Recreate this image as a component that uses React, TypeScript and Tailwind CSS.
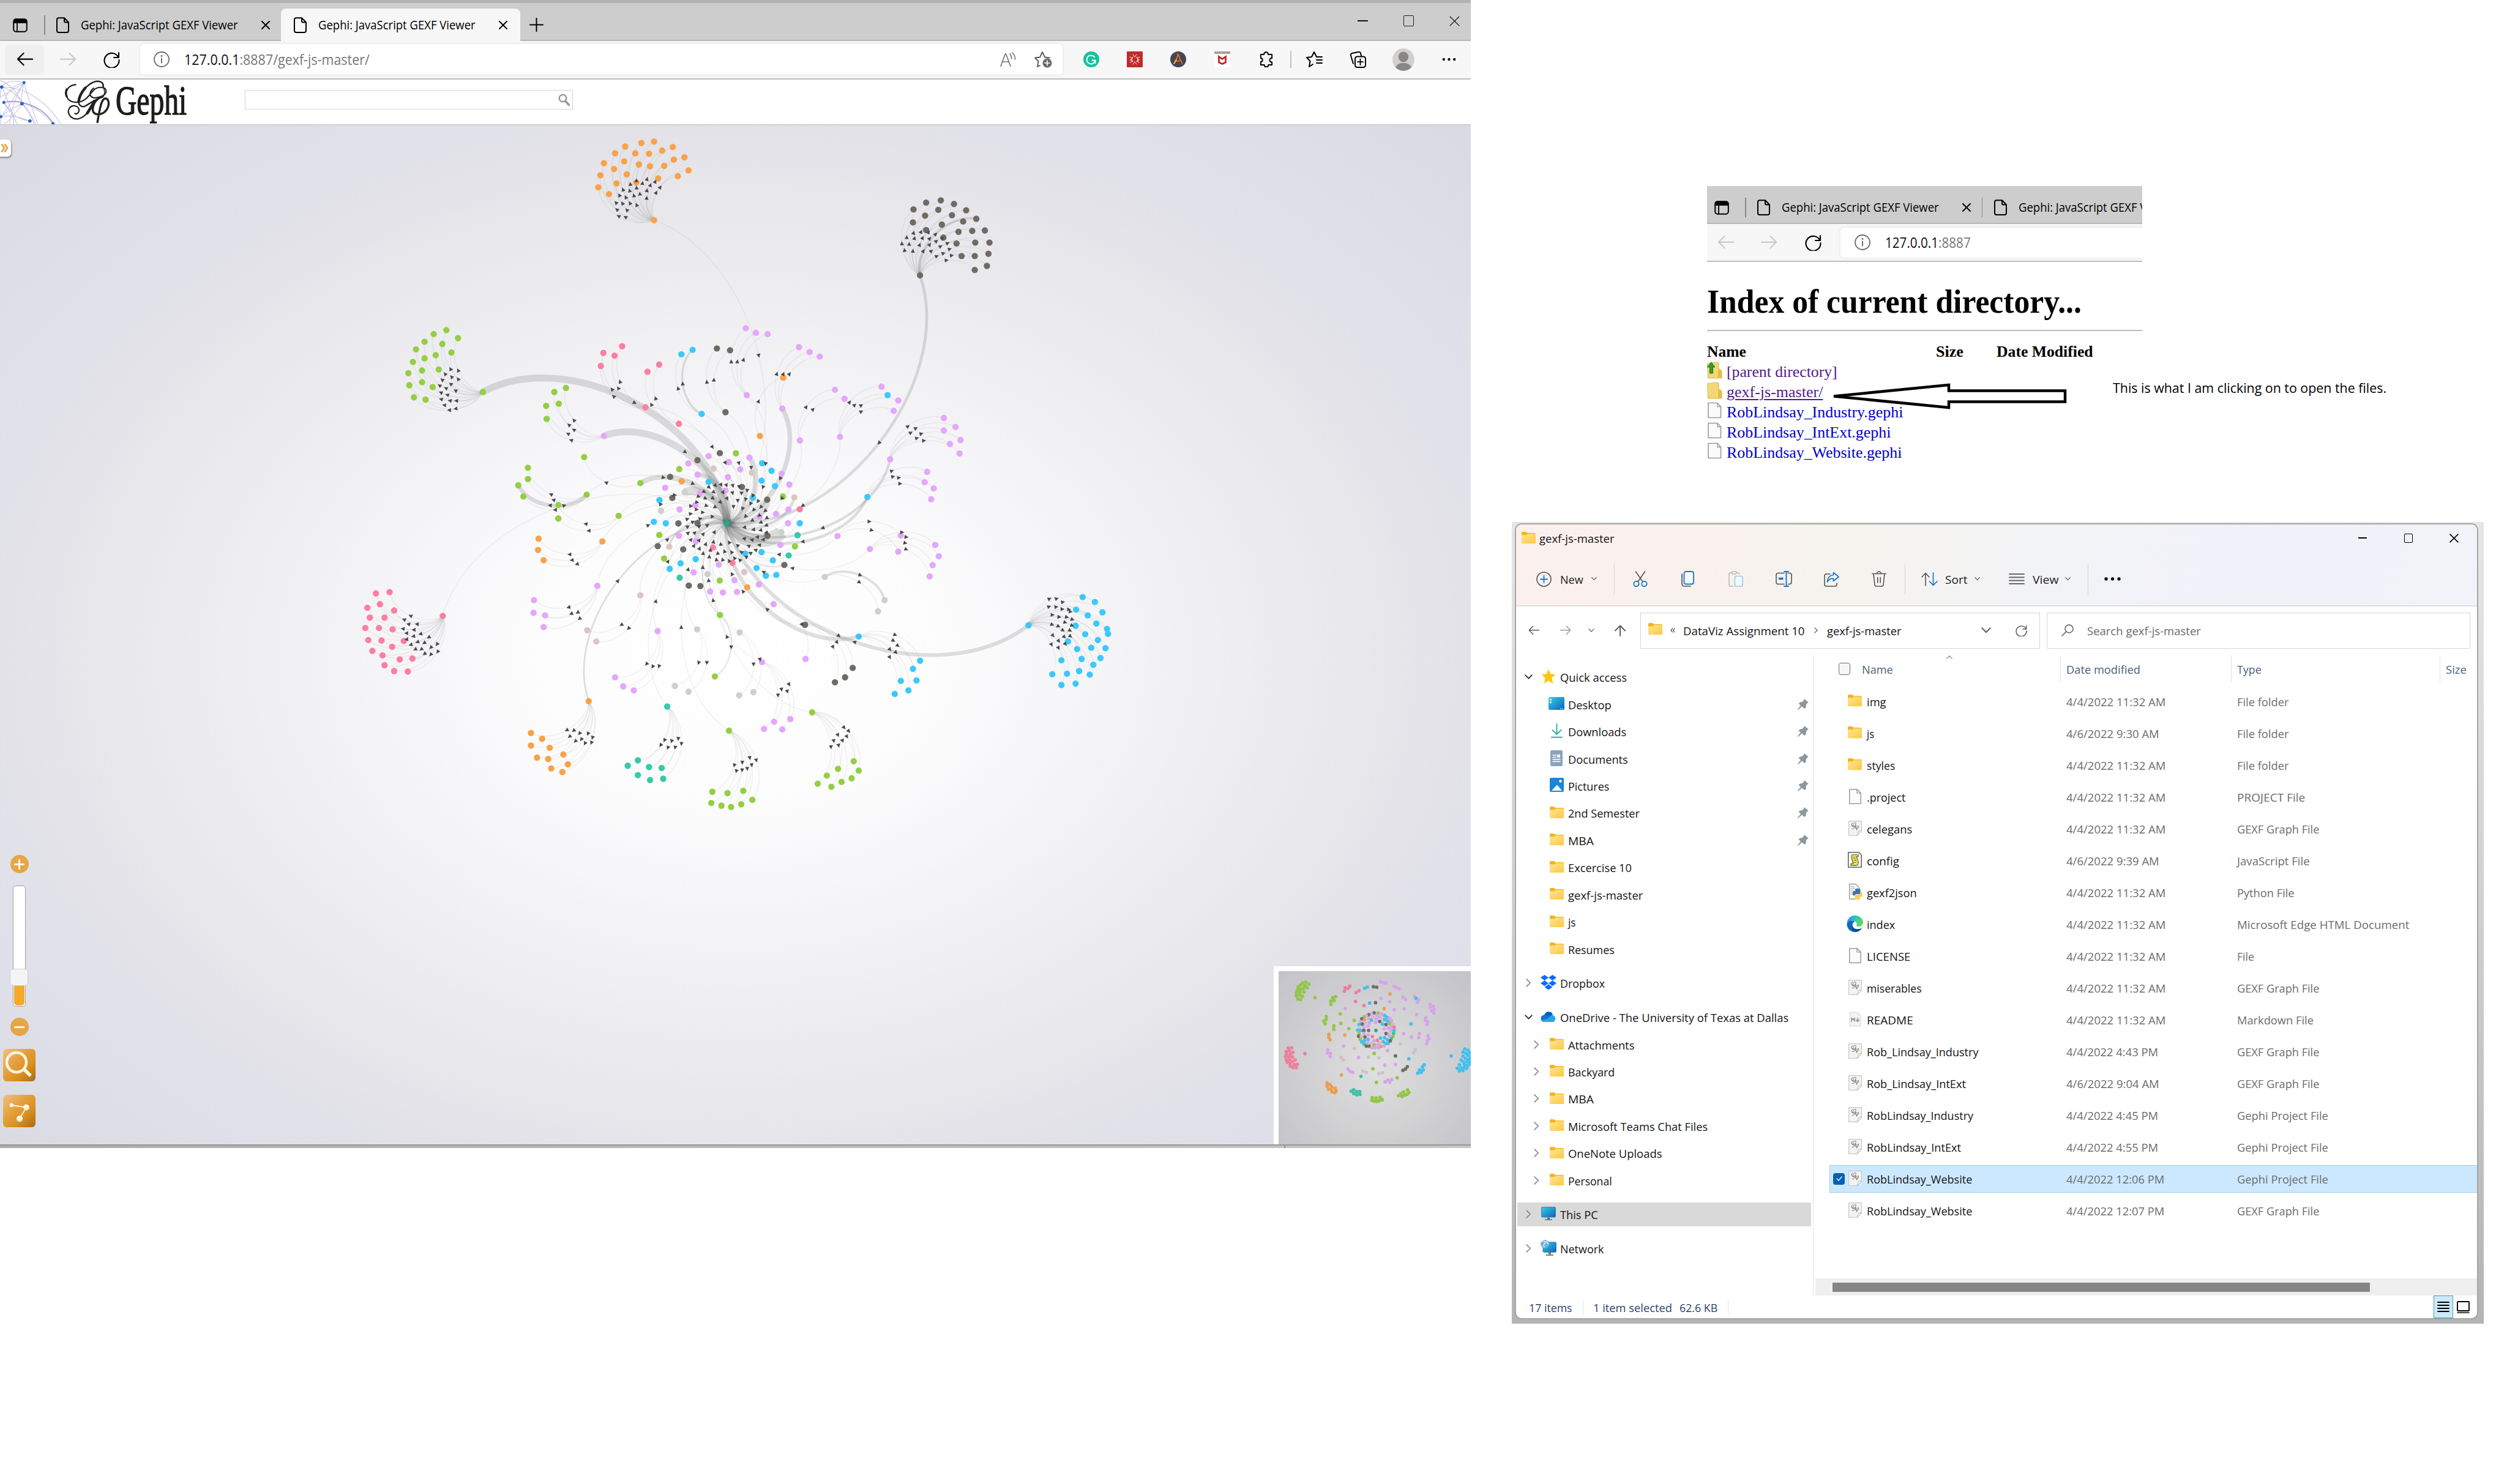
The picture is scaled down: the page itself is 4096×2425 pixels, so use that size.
import React, { useLayoutEffect, useRef, useState } from "react";

/* ---------- text that is squeezed or stretched to a given width ---------- */
function Fit({ w, children, className = "" }: { w: number; children: React.ReactNode; className?: string }) {
  const ref = useRef<HTMLSpanElement>(null);
  const [k, setK] = useState(1);
  useLayoutEffect(() => {
    const el = ref.current;
    if (el && el.offsetWidth) setK(w / el.offsetWidth);
  }, [w]);
  return (
    <span className={"block shrink-0 whitespace-nowrap " + className} style={{ width: w }}>
      <span ref={ref} className="inline-block origin-left" style={{ transform: `scaleX(${k})` }}>
        {children}
      </span>
    </span>
  );
}

type SvgP = { w: number; h: number; vb: string; className?: string; children: React.ReactNode };
function Svg({ w, h, vb, className = "", children }: SvgP) {
  return (
    <svg
      width={w}
      height={h}
      viewBox={vb}
      preserveAspectRatio="none"
      fill="none"
      stroke="currentColor"
      strokeLinecap="round"
      strokeLinejoin="round"
      className={"block shrink-0 " + className}
    >
      {children}
    </svg>
  );
}

/* ---------- graph data ---------- */
const COLORS: Record<string, string> = {
  o: "#f9a247",
  k: "#6f6b64",
  g: "#94cf43",
  r: "#fb7fa1",
  c: "#3cc8fb",
  p: "#e4a7fb",
  s: "#cfcfcf",
  t: "#38caa8",
  b: "#dcc6c3",
};
type Pt = { x: number; y: number; c: string; w: number };
const CENTER = { x: 1281, y: 921 };

function parse(src: string, color: string, sx: number, sy: number, ox: number, oy: number): Pt[] {
  return src
    .split(";")
    .filter(Boolean)
    .map((item) => {
      const f = item.split(",");
      return {
        x: Number(f[0]) / sx + ox,
        y: Number(f[1]) / sy + oy,
        c: f[2] || color,
        w: f[3] ? Number(f[3]) : 0,
      };
    });
}
const outer = (src: string, color: string) => parse(src, color, 1.12, 1.2645, 600, 220);
const inner = (src: string, color: string) => parse(src, color, 2.6133, 2.8, 1000, 650);

/* default colour, hub, leaves */
const GROUPS: [string, string, string][] = [
  ["o", "619,211", "619,36;594,39;562,47;656,48;635,56;542,62;582,62;609,63;679,71;658,76;560,80;520,84;589,87;639,90;611,91;540,97;687,100;565,109;513,111;666,113;627,118;584,127;545,129;509,138;530,153"],
  ["k", "1144,334,k,5", "1185,167;1156,172;1211,175;1131,187;1180,188;1235,189;1154,201;1207,200;1255,208,k,4;1130,216;1229,214;1187,221;1156,233;1220,237;1247,235;1272,234;1190,250;1216,263;1253,261;1281,261;1226,291;1252,291;1279,286;1276,313;1252,322"],
  ["g", "281,594,g,12", "209,456;184,465;232,474;166,482;201,487;149,499;219,506;188,512;166,519;143,527;194,544;161,546;134,552;161,572;136,579;182,583;145,606;168,611"],
  ["r", "202,1093", "70,1043;97,1040;78,1067;53,1075;106,1081;58,1097;87,1097;49,1120;76,1120;103,1123;55,1147;81,1148;125,1149;102,1162;63,1171;83,1181;117,1190;142,1188;87,1203;106,1216;133,1217"],
  ["c", "1358,1114,c,6.5", "1465,1051;1489,1062;1452,1079;1504,1085;1475,1092;1492,1110;1451,1115;1513,1122;1515,1133;1470,1134;1495,1147;1436,1150;1454,1167;1482,1164;1510,1165;1423,1192;1463,1189;1500,1187;1486,1202;1458,1216;1405,1223;1434,1222;1479,1224;1423,1247;1451,1244"],
  ["o", "490,1283,o,3", "376,1354;398,1367;376,1382;413,1387;388,1409;410,1412;440,1402;449,1424;416,1433;438,1441"],
  ["t", "645,1295", "587,1415;567,1427;609,1430;634,1432;587,1448;611,1459;637,1456"],
  ["g", "767,1349", "734,1485;764,1488;795,1483;813,1503;732,1510;752,1516;771,1519;791,1513"],
  ["g", "931,1308", "1013,1417;1023,1438;1009,1455;982,1434;960,1449;989,1463;942,1467;969,1474"],
  ["c", "1023,1139,c,7", "1144,1193;1130,1211;1106,1238;1137,1237;1121,1259;1094,1267"],
  ["k", "917,1113", "1011,1209;996,1230;976,1241"],
  ["p", "832,1196", "888,1323;856,1329;836,1345;872,1346"],
  ["p", "626,1127", "542,1230;558,1250;579,1259"],
  ["s", "704,1123", "660,1249;687,1262"],
  ["s", "788,1130", "787,1270;815,1263"],
  ["g", "749,1091,g,2", "739,1228,g,2"],
  ["p", "507,1026", "382,1058;381,1086;404,1092;401,1118"],
  ["b", "592,1047", "487,1125;505,1150"],
  ["o", "517,927", "391,921;390,946;401,969"],
  ["g", "549,870", "430,876;430,846"],
  ["g", "486,823", "370,763;370,788;351,802,g,7;361,827"],
  ["g", "592,797,g,9", "481,739"],
  ["g", "520,692,p,12", "422,594;445,585;406,625;431,620;407,654"],
  ["r", "602,628", "519,507;556,492;541,513;514,536"],
  ["r", "668,665", "629,533;606,549"],
  ["c", "713,643", "695,500,c,3.5;673,510"],
  ["k", "760,639", "743,497;769,501"],
  ["p", "802,601", "800,452;820,462;843,465"],
  ["p", "872,631,p,8", "905,494;926,505;946,515"],
  ["o", "828,692", "874,562"],
  ["p", "907,702", "976,589;995,609"],
  ["p", "986,694", "1068,582;1080,601,c;1101,613;1092,636"],
  ["p", "1085,744,p,4.5", "1191,652;1191,680;1214,672;1224,701;1203,710;1222,731"],
  ["p", "1040,828,c,5", "1158,772;1153,795;1171,809;1166,833"],
  ["p", "981,915", "1106,914;1101,950"],
  ["p", "1045,944", "1174,935;1181,960;1169,980;1163,1005"],
  ["s", "956,1006", "1074,1058,s,4;1061,1083"],
  ["p", "855,1067", "918,1189"],
];

const RING = inner(
  "702,413,k;776,414,g;650,428,p;838,435,p,9;599,448,k;557,464,p;743,458,p;897,463,c;796,493,p;673,489,b;849,510,b;515,492,g;940,500,c;599,519,p,8;986,515,p;739,532,p;473,530,k;526,552,o;650,555,c;894,549,c;956,576,c;1022,568,p;450,584,p;804,580,k,6;728,598,p;611,610,p;540,606,s,15;483,634,k;992,627,g;1045,631,b,5;424,645,c;854,633,c;920,643,k,10;589,670,p;431,698,s;516,691,p;1018,692,p;1070,690,r;961,713,p;885,728,p;398,752,c;453,759,c;511,760,k;599,759,k,6;1016,759,p;1070,759,c;985,803,s,24;423,817,g;514,821,p;921,821,k,12;1060,818,t;591,849,p,8;416,872,k;469,875,b,3;670,879,r;533,888,k;981,866,p;1048,873,g;819,909,c;894,902,c;1019,918,t;445,933,g;591,936,c;521,957,c;760,955,r;697,963,p;946,942,c;999,965,k,2;471,984,c;581,1002,p;871,980,c;645,1010,s;814,1000,b;517,1028,t;914,1018,c;962,1014,c;769,1040,p;701,1042,g;559,1067,k;612,1069,k;828,1075,o;882,1061,p;657,1096,p;716,1101,p;781,1098,p",
  "p",
);

type Edge = { d: string; w: number; ax: number; ay: number; a: number };
/* every edge is a cubic arc that bulges to one side of its chord */
function edge(s: { x: number; y: number }, t: { x: number; y: number }, w: number): Edge {
  const dx = t.x - s.x;
  const dy = t.y - s.y;
  const c1 = [s.x + 0.2 * dx + 0.3 * dy, s.y + 0.2 * dy - 0.3 * dx];
  const c2 = [s.x + 0.8 * dx + 0.3 * dy, s.y + 0.8 * dy - 0.3 * dx];
  return {
    d: `M${s.x} ${s.y}C${c1[0]} ${c1[1]} ${c2[0]} ${c2[1]} ${t.x} ${t.y}`,
    w,
    ax: (s.x + t.x) / 2 + 0.225 * dy,
    ay: (s.y + t.y) / 2 - 0.225 * dx,
    a: (Math.atan2(dy, dx) * 180) / Math.PI,
  };
}

const NODES: Pt[] = [...RING];
const EDGES: Edge[] = RING.map((n) => edge(n, CENTER, n.w));
for (const [color, hubSrc, leafSrc] of GROUPS) {
  const hub = outer(hubSrc, color)[0];
  const leaves = outer(leafSrc, color);
  NODES.push(hub, ...leaves);
  EDGES.push(edge(hub, CENTER, hub.w), ...leaves.map((l) => edge(hub, l, l.w)));
}

function NodeDots({ r }: { r: number }) {
  return (
    <g stroke="none">
      {NODES.map((n, i) => (
        <circle key={i} cx={n.x} cy={n.y} r={r} fill={COLORS[n.c]} />
      ))}
      <circle cx={CENTER.x} cy={CENTER.y} r={r} fill="#20ab88" />
    </g>
  );
}

function Graph() {
  return (
    <Svg w={2403} h={1666} vb="0 220 2592 1797">
      {EDGES.map((e, i) => (
        <path
          key={i}
          d={e.d}
          strokeLinecap="butt"
          stroke={e.w ? "rgba(70,70,70,0.17)" : "rgba(60,60,60,0.06)"}
          strokeWidth={e.w || 1.9}
        />
      ))}
      <NodeDots r={5.6} />
      <g fill="#4a4a4a" stroke="none">
        {EDGES.map((e, i) => (
          <path key={i} d="M4.400 0L-2.500 3.600V-3.600Z" transform={`translate(${e.ax} ${e.ay}) rotate(${e.a})`} />
        ))}
      </g>
    </Svg>
  );
}

/* ---------- browser icons ---------- */
const TabActions = () => (
  <Svg w={24} h={23} vb="0 0 24 23">
    <rect x="1.2" y="1.2" width="21.6" height="20.6" rx="4" strokeWidth="2" />
    <path d="M2 2h20v5.500H2z" fill="#000" />
    <path d="M7 7v14" strokeWidth="1.8" />
  </Svg>
);
const PageIcon = () => (
  <Svg w={21} h={26} vb="0 0 21 26">
    <path d="M4 1.200h9l7 7.300V22a3 3 0 0 1-3 3H4a3 3 0 0 1-3-3V4a3 3 0 0 1 3-2.800zM13 1.500V6.500a2 2 0 0 0 2 2h5" strokeWidth="2" />
  </Svg>
);
const CloseX = ({ s = 14, sw = 2 }: { s?: number; sw?: number }) => (
  <Svg w={s} h={s} vb="0 0 14 14">
    <path d="M1 1l12 12M13 1L1 13" strokeWidth={sw} />
  </Svg>
);
const ArrowLeft = ({ w = 27, sw = 2.2, className = "" }: { w?: number; sw?: number; className?: string }) => (
  <Svg w={w} h={w * 0.86} vb="0 0 28 24" className={className}>
    <path d="M27 12H2M12 2L2 12l10 10" strokeWidth={sw} />
  </Svg>
);
const Reload = ({ w = 27 }: { w?: number }) => (
  <Svg w={w} h={w} vb="0 0 27 27">
    <path d="M24.500 10A12 12 0 1 0 25.500 14M25 2v8h-8" strokeWidth="2.1" />
  </Svg>
);
const InfoIcon = () => (
  <Svg w={26} h={26} vb="0 0 26 26" className="text-[#6b6b6b]">
    <circle cx="13" cy="13" r="12" strokeWidth="1.8" />
    <path d="M13 11.500v7" strokeWidth="2" />
    <circle cx="13" cy="7.500" r="1.400" fill="currentColor" stroke="none" />
  </Svg>
);

const TabTitle = () => (
  <Fit w={257} className="ml-[19px] text-[19.500px]">
    Gephi: JavaScript GEXF Viewer
  </Fit>
);

function BrowserWindow() {
  return (
    <div className="absolute left-0 top-0 flex h-[1876px] w-[2403px] flex-col overflow-hidden bg-white">
      {/* tab strip */}
      <div className="flex h-[67px] shrink-0 border-t-[5px] border-b-2 border-t-[#b2b2b2] border-b-[#b7b7b7] bg-[#cdcdcd]">
        <div className="flex items-center pl-[21px] pt-[12px]">
          <TabActions />
          <div className="ml-[27px] h-[32px] w-[1.500px] bg-[#8a8a8a]" />
          <div className="ml-[18px]">
            <PageIcon />
          </div>
          <TabTitle />
          <div className="ml-[38px]">
            <CloseX />
          </div>
        </div>
        <div className="-mb-[2px] ml-[18px] mt-[9px] flex w-[391px] items-center rounded-t-[8px] bg-[#f7f7f7] pl-[21px]">
          <PageIcon />
          <TabTitle />
          <div className="ml-[38px]">
            <CloseX />
          </div>
        </div>
        <div className="ml-[15px] flex items-center pt-[10px]">
          <Svg w={23} h={23} vb="0 0 23 23">
            <path d="M11.500 1v21M1 11.500h21" strokeWidth="2" />
          </Svg>
        </div>
        <div className="ml-auto mr-[18px] mt-[20px] flex h-[18px] items-center text-[#222]">
          <div className="h-[2px] w-[17px] bg-[#111]" />
          <div className="ml-[58px] h-[18px] w-[17px] rounded-[2px] border-[1.500px] border-[#222]" />
          <div className="ml-[58px]">
            <CloseX s={17} sw={1.1} />
          </div>
        </div>
      </div>
      {/* toolbar */}
      <div className="flex h-[63px] shrink-0 items-center border-b-2 border-[#bdbdbd] bg-[#f7f7f7] pb-[1px]">
        <div className="ml-[8px] flex h-[49px] w-[64px] items-center justify-center rounded-[5px] bg-[#efefef]">
          <ArrowLeft />
        </div>
        <ArrowLeft className="ml-[26px] rotate-180 text-[#c9c9c9]" />
        <div className="ml-[44px]">
          <Reload />
        </div>
        <div className="ml-[33px] flex h-[50px] w-[1507px] items-center rounded-[6px] bg-white pl-[22px] shadow-[0_0_4px_rgba(0,0,0,0.1)]">
          <InfoIcon />
          <Fit w={303} className="ml-[24px] text-[23px] text-[#777]">
            <span className="text-[#111]">127.0.0.1</span>:8887/gexf-js-master/
          </Fit>
          <Svg w={26} h={24} vb="0 0 26 24" className="ml-auto text-[#777]">
            <path d="M1 23L8.500 3h1L17 23M4 16h10M16 3c2 2 2.500 5 2.500 8M20 1c3 3 4.500 7 4.500 11" strokeWidth="1.700" />
          </Svg>
          <Svg w={29} h={28} vb="0 0 29 28" className="ml-[30px] mr-[17px] text-[#555]">
            <path d="M9 24l-4 2 1.500-9L1 11.500l8-1L13 2l4 8.500 8 1" strokeWidth="1.800" />
            <circle cx="21" cy="20" r="7.500" fill="#6a6a6a" stroke="none" />
            <path d="M21 16v8M17 20h8" stroke="#fff" strokeWidth="1.600" />
          </Svg>
        </div>
        <Svg w={26} h={26} vb="0 0 26 26" className="ml-[34px]">
          <circle cx="13" cy="13" r="13" fill="#15c39a" stroke="none" />
          <path d="M18 9a7 7 0 1 0 1.500 5.500h-5M19.500 14.500V19" stroke="#fff" strokeWidth="2" />
        </Svg>
        <Svg w={26} h={26} vb="0 0 26 26" className="ml-[45px]">
          <rect width="26" height="26" rx="1" fill="#c22a2c" stroke="none" />
          <path d="M10 5l3 4 3-4M10 21l3-4 3 4M5 9l4 2-3 3 3 2-3 2M21 9l-4 2 3 3-3 2 3 2M10 9l-2 4 2 4M16 9l2 4-2 4" stroke="#f4c9c9" strokeWidth="1.100" />
        </Svg>
        <Svg w={26} h={26} vb="0 0 26 26" className="ml-[45px]">
          <circle cx="13" cy="13" r="13" fill="#454555" stroke="none" />
          <path d="M6 20C10 14 12 9 12.500 4l7 16M8 15c4 2 7 1 9-1" stroke="#e5702b" strokeWidth="1.800" />
          <path d="M6 20c1.500-2 3-4 4-6.500" stroke="#f0c63a" strokeWidth="1.800" />
        </Svg>
        <Svg w={26} h={26} vb="0 0 26 26" className="ml-[46px]">
          <rect width="26" height="26" fill="#fff" stroke="none" />
          <rect width="26" height="4" fill="#a5a1a1" stroke="none" />
          <path d="M7.500 8.500l5.500 4 5.500-4v9.500L13 20.500 7.500 18z" stroke="#c01818" strokeWidth="2.600" strokeLinejoin="miter" />
        </Svg>
        <Svg w={25} h={26} vb="0 0 26 26" className="ml-[46px]">
          <path d="M4 5h5.500c0-5 7-5 7 0H23v6c-5 0-5 6.500 0 6.500V22h-6c0 4.500-7 4.500-7 0H4v-5c4 0 4-6 0-6z" strokeWidth="2" />
        </Svg>
        <div className="ml-[27px] h-[28px] w-[1.500px] bg-[#c2c2c2]" />
        <Svg w={27} h={26} vb="0 0 27 26" className="ml-[24px]">
          <path d="M11 21l-6 4 1.500-9L1 10l8-1 4-8 4 8h9M17 14h9M17 19h9" strokeWidth="2" />
        </Svg>
        <Svg w={27} h={27} vb="0 0 27 27" className="ml-[44px]">
          <path d="M6 20L2 7a3 3 0 0 1 2-4l10-2a3 3 0 0 1 4 2l1 4" strokeWidth="2" />
          <rect x="9" y="8.500" width="17" height="17.500" rx="3.500" strokeWidth="2" />
          <path d="M17.500 12.500v9.500M13 17.200h9" strokeWidth="1.800" />
        </Svg>
        <Svg w={36} h={37} vb="0 0 37 37" className="ml-[43px]">
          <circle cx="18.500" cy="18.500" r="18.500" fill="#d2d0ce" stroke="none" />
          <circle cx="18.500" cy="14" r="8.500" fill="#8a8886" stroke="none" />
          <path d="M5 31a14 10 0 0 1 27 0 19 19 0 0 1-27 0z" fill="#8a8886" stroke="none" />
        </Svg>
        <Svg w={23} h={6} vb="0 0 23 6" className="ml-[45px]">
          <g fill="#111" stroke="none">
            <circle cx="2.800" cy="3" r="2.200" />
            <circle cx="11.500" cy="3" r="2.200" />
            <circle cx="20.200" cy="3" r="2.200" />
          </g>
        </Svg>
      </div>
      {/* gephi header */}
      <div className="flex h-[75px] shrink-0 items-start border-b-2 border-[#cfcfd2] bg-white">
        <Svg w={99} h={73} vb="0 6 320 237">
          <g stroke="#8c88c8" strokeOpacity="0.500" strokeWidth="3.500">
            <path d="M127 22C60 5 20 20-10 60M127 22C150 120 180 180 200 243M127 22C80 60 30 80 0 100M10 46C80 60 140 150 190 243M10 46C120 40 250 120 320 243M20 128C80 110 180 130 280 240M116 134C60 160 20 190 5 203M116 134C150 170 170 210 180 243M20 128C40 60 80 30 127 22M5 203C60 190 120 210 158 226M20 128C60 200 110 220 158 226M127 22C90 80 60 160 50 243M10 46C40 110 60 180 90 243M116 134C110 90 120 50 127 22M10 46C-10 120 0 180 5 243M20 128C60 170 80 210 70 243M0 12C60 30 100 90 116 134M5 203C30 180 60 120 127 22M116 134C90 170 60 220 20 243" />
          </g>
          <path d="M20 128C90 108 220 140 282 240" stroke="#8a86d0" strokeOpacity="0.750" strokeWidth="6" />
          <g fill="#1d66c4" stroke="none">
            <circle cx="127" cy="22" r="8" />
            <circle cx="9" cy="46" r="9" />
            <circle cx="20" cy="128" r="8" />
            <circle cx="116" cy="134" r="9" />
            <circle cx="5" cy="203" r="8" />
            <circle cx="158" cy="226" r="9" />
            <circle cx="280" cy="241" r="9" />
          </g>
        </Svg>
        <Svg w={77} h={73} vb="340 6 250 237" className="ml-[6px] text-[#222]">
          <path d="M401 33C362 34 343 68 353 96C366 134 420 134 452 110C478 90 488 62 510 52C536 42 562 50 562 68C560 92 520 106 494 102C470 96 474 66 496 52" strokeWidth="7" />
          <path d="M353 58C347 72 348 86 353 96" strokeWidth="11" />
          <path d="M546 42C550 20 524 10 500 18C460 32 422 80 416 116C414 144 434 158 456 144C480 128 506 110 545 98" strokeWidth="8" />
          <path d="M452 50C432 72 420 96 416 122" strokeWidth="14" />
          <path d="M548 40C552 66 560 78 545 98" strokeWidth="5" />
          <path d="M497 128C480 154 460 206 412 215C372 218 352 182 368 156C384 138 412 144 418 164C420 184 404 192 396 186" strokeWidth="7" />
          <path d="M500 120C486 146 476 164 462 184" strokeWidth="15" />
          <path d="M522 106C496 124 486 160 494 178C506 198 548 194 566 164C584 132 574 108 558 106C538 108 530 150 516 232" strokeWidth="11" />
        </Svg>
        <Fit w={116} className="ml-[7px] mt-[1px] font-['Liberation_Serif',serif] text-[68px] leading-[66px] text-[#1c1c1c] [-webkit-text-stroke:1.500px_#1c1c1c]">
          Gephi
        </Fit>
        <div className="ml-[95px] mt-[17px] flex h-[32px] w-[536px] items-center justify-end border-[1.500px] border-[#d4d4d4] pr-[3px]">
          <Svg w={20} h={21} vb="0 0 20 21" className="text-[#9a9a9a]">
            <circle cx="7.500" cy="7.500" r="5.800" strokeWidth="2.400" />
            <path d="M12.500 13l5 5.500" strokeWidth="3.500" />
          </Svg>
        </div>
      </div>
      {/* graph canvas */}
      <div className="relative h-[1665px] shrink-0 overflow-hidden bg-[radial-gradient(ellipse_farthest-corner_at_50%_52%,#ffffff_0%,#fcfcfd_20%,#f2f2f5_40%,#e9e9ed_58%,#e2e2e8_70%,#e0e0ea_80%,#d9d9e1_100%)]">
        <Graph />
        <div className="absolute -left-[6px] top-[23px] flex h-[28px] w-[24px] items-center justify-center rounded-[6px] bg-white pl-[3px] text-[#e5a03c] shadow-[1px_2px_3px_rgba(0,0,0,0.4)]">
          <Svg w={12} h={14} vb="0 0 12 14">
            <path d="M1 1l4 6-4 6M6 1l4 6-4 6" strokeWidth="2.500" />
          </Svg>
        </div>
        <div className="absolute left-[5px] top-[1192px] flex w-[53px] flex-col items-center">
          <div className="relative flex size-[30px] items-center justify-center rounded-full bg-[#e6a646]">
            <div className="h-[3px] w-[17px] bg-[#fff3de]" />
            <div className="absolute h-[17px] w-[3px] bg-[#fff3de]" />
          </div>
          <div className="relative mt-[20px] flex h-[198px] w-[21px] items-end rounded-[5px] border border-[#a0a0a0] bg-white p-[1px]">
            <div className="h-[40px] w-full rounded-b-[5px] bg-[#f6a829]" />
            <div className="absolute -left-[6px] top-[135px] h-[28px] w-[30px] rounded-[6px] border border-[#cdcdcd] bg-[#f4f4f4]" />
          </div>
          <div className="mt-[18px] flex size-[30px] items-center justify-center rounded-full bg-[#e6a646]">
            <div className="h-[3px] w-[17px] bg-[#fff3de]" />
          </div>
          <div className="mt-[21px] h-[53px] w-[53px] rounded-[6px] bg-[linear-gradient(135deg,#efc183_0%,#e5a03e_40%,#dc9120_65%,#a86a18_100%)]">
            <Svg w={53} h={53} vb="0 0 53 53" className="text-[#fff3e0]">
              <circle cx="22" cy="22" r="16" strokeWidth="4.500" />
              <path d="M34 33l11 11" strokeWidth="5.500" strokeLinecap="butt" />
            </Svg>
          </div>
          <div className="mt-[22px] h-[53px] w-[53px] rounded-[6px] bg-[linear-gradient(135deg,#efc183_0%,#e5a03e_40%,#dc9120_65%,#a86a18_100%)]">
            <Svg w={53} h={53} vb="0 0 53 53" className="text-[#fff3e0]">
              <path d="M14 17l24 3.500L27 39" strokeWidth="2" />
              <g fill="currentColor" stroke="none">
                <circle cx="14" cy="17" r="3.300" />
                <circle cx="38" cy="20.500" r="4.800" />
                <circle cx="27" cy="39" r="5" />
              </g>
            </Svg>
          </div>
        </div>
        {/* overview map */}
        <div className="absolute bottom-0 right-0 h-[291px] w-[322px] border-l-[8px] border-t-[8px] border-white bg-[radial-gradient(ellipse_at_50%_55%,#ececed_0%,#dcdcde_50%,#cbcbd2_100%)]">
          <Svg w={314} h={284} vb="2253 1711 339 306">
            <g transform="translate(2104.400 1585.100) scale(0.25)">
              <NodeDots r={12.5} />
            </g>
            <rect x="2253" y="1711" width="339" height="306" fill="#808080" fillOpacity="0.120" stroke="none" />
          </Svg>
        </div>
      </div>
      <div className="flex h-[6px] shrink-0 border-t-2 border-[#989898] bg-[linear-gradient(90deg,#acacac,#c6c6c6)]">
        <div className="ml-[2098px] w-[2px] bg-[#8f8f8f]" />
      </div>
    </div>
  );
}

/* ---------- directory listing ---------- */
const FileGlyph = () => (
  <Svg w={24} h={27} vb="0 0 24 27">
    <path d="M2 1.500h15l5.500 6v18H2z" fill="#fbfbfb" stroke="#9b9b9b" strokeWidth="1.600" />
    <path d="M17 1.500v6h5.500" stroke="#9b9b9b" strokeWidth="1.300" />
  </Svg>
);
const DirGlyph = ({ up }: { up?: boolean }) => (
  <Svg w={26} h={28} vb="0 0 26 28">
    <path d="M1 3l13-2 5 1v9l5 4v12H2z" fill="#f3d777" stroke="#d9b544" strokeWidth="1" />
    <path d="M18 12l6 4v10h-6z" fill="#e5bd45" stroke="none" />
    {up && <path d="M7 1l6 8h-3.500v10h-5V9H1z" fill="#2e9e2c" stroke="#1b7a1c" strokeWidth="1" />}
  </Svg>
);

const DIR_ROWS = [
  { n: "[parent directory]", w: 181, c: "text-[#551a8b]", i: <DirGlyph up /> },
  { n: "gexf-js-master/", w: 157, c: "text-[#551a8b] [&>span]:underline [&>span]:decoration-2 [&>span]:underline-offset-[3px]", i: <DirGlyph /> },
  { n: "RobLindsay_Industry.gephi", w: 288, c: "text-[#0000cc]", i: <FileGlyph /> },
  { n: "RobLindsay_IntExt.gephi", w: 268, c: "text-[#0000cc]", i: <FileGlyph /> },
  { n: "RobLindsay_Website.gephi", w: 286, c: "text-[#0000cc]", i: <FileGlyph /> },
];

function DirectoryListing() {
  return (
    <div className="absolute left-[2789px] top-[304px] w-[711px] overflow-hidden bg-white">
      <div className="flex h-[62px] w-[900px] items-center border-b-2 border-[#b7b7b7] bg-[#cdcdcd] pl-[12px] pt-[10px]">
        <TabActions />
        <div className="ml-[26px] h-[32px] w-[1.500px] bg-[#8a8a8a]" />
        <div className="ml-[18px]">
          <PageIcon />
        </div>
        <TabTitle />
        <div className="ml-[38px]">
          <CloseX />
        </div>
        <div className="ml-[18px] h-[32px] w-[1.500px] bg-[#8a8a8a]" />
        <div className="ml-[19px]">
          <PageIcon />
        </div>
        <TabTitle />
      </div>
      <div className="flex h-[62px] w-[900px] items-center border-b-2 border-[#bdbdbd] bg-[#f7f7f7]">
        <ArrowLeft className="ml-[17px] text-[#c9c9c9]" />
        <ArrowLeft className="ml-[44px] rotate-180 text-[#c9c9c9]" />
        <div className="ml-[45px]">
          <Reload />
        </div>
        <div className="ml-[31px] flex h-[49px] w-[700px] items-center rounded-[6px] bg-white pl-[23px] shadow-[0_0_4px_rgba(0,0,0,0.1)]">
          <InfoIcon />
          <Fit w={140} className="ml-[24px] text-[23px] text-[#777]">
            <span className="text-[#111]">127.0.0.1</span>:8887
          </Fit>
        </div>
      </div>
      <div className="font-['Liberation_Serif',serif] text-[26px] text-black">
        <h1 className="mt-[35px] text-[54px] font-bold leading-[60px]">
          <Fit w={612}>Index of current directory...</Fit>
        </h1>
        <div className="mt-[16px] h-[2px] bg-[#bdbdbd]" />
        <div className="mt-[17px] flex h-[33px] items-center font-bold">
          <Fit w={64}>Name</Fit>
          <Fit w={45} className="ml-[310px]">
            Size
          </Fit>
          <Fit w={158} className="ml-[54px]">
            Date Modified
          </Fit>
        </div>
        {DIR_ROWS.map((r) => (
          <div key={r.n} className="flex h-[33px] items-center">
            <div className="w-[32px] pb-[6px]">{r.i}</div>
            <Fit w={r.w} className={r.c}>
              {r.n}
            </Fit>
          </div>
        ))}
      </div>
    </div>
  );
}

/* ---------- explorer icons ---------- */
const Folder = ({ w = 23 }: { w?: number }) => (
  <Svg w={w} h={w * 0.84} vb="0 0 23 19">
    <defs>
      <linearGradient id="folderFill" x1="0" y1="0" x2="1" y2="1">
        <stop offset="0" stopColor="#ffe59b" />
        <stop offset="1" stopColor="#fcc83c" />
      </linearGradient>
    </defs>
    <path d="M0 1.500A1.500 1.500 0 0 1 1.500 0h5.500l2.500 2h12A1.500 1.500 0 0 1 23 3.500V8H0z" fill="#f4b51f" stroke="none" />
    <path d="M0 5.500h7.500L10 3.200h11.500A1.500 1.500 0 0 1 23 4.700v12.800a1.500 1.500 0 0 1-1.500 1.500h-20A1.500 1.500 0 0 1 0 17.500z" fill="url(#folderFill)" stroke="none" />
  </Svg>
);
const Chevron = ({ dir, w = 12, className = "" }: { dir: "down" | "right" | "up"; w?: number; className?: string }) =>
  dir === "right" ? (
    <Svg w={w * 0.6} h={w} vb="0 0 7 12" className={className}>
      <path d="M1 1l5 5-5 5" strokeWidth="1.500" />
    </Svg>
  ) : (
    <Svg w={w} h={w * 0.6} vb="0 0 12 7" className={className}>
      <path d={dir === "down" ? "M1 1l5 5 5-5" : "M1 6l5-5 5 5"} strokeWidth="1.500" />
    </Svg>
  );
const Pin = () => (
  <Svg w={18} h={18} vb="0 0 18 18">
    <path d="M11 0l7 6-2.500 1-2 3.500.3 3.500L11 16 7 12.500 1 18l-1-1 5-6-3.500-3.500L4 5.500l3.500-.5L10 2.500z" fill="#8d979f" stroke="none" />
  </Svg>
);
const StarIcon = () => (
  <Svg w={24} h={25} vb="0 0 24 25">
    <path d="M12 .5l3.400 8 8.100.6-6.200 5.600 2 9.300L12 19.200 4.700 24l2-9.300L.5 9.100l8.100-.6z" fill="#fcc510" stroke="none" />
  </Svg>
);
const DesktopIcon = () => (
  <Svg w={26} h={21} vb="0 0 26 21">
    <defs>
      <linearGradient id="deskFill" x1="0" y1="0" x2="1" y2="1">
        <stop offset="0" stopColor="#35d0e6" />
        <stop offset="1" stopColor="#0d62b8" />
      </linearGradient>
    </defs>
    <rect width="26" height="21" rx="2" fill="url(#deskFill)" stroke="none" />
    <path d="M2 3h3v2.500H2zM2 7.500h3V10H2zM19 18.500h1.500V20H19zM22 18.500h1.500V20H22z" fill="#e9fbff" stroke="none" />
  </Svg>
);
const DownloadIcon = () => (
  <Svg w={19} h={24} vb="0 0 19 24" className="text-[#2bb09b]">
    <path d="M9.500 1v17M2.500 11l7 7 7-7M1 22.800h17" strokeWidth="1.900" />
  </Svg>
);
const DocumentsIcon = () => (
  <Svg w={20} h={26} vb="0 0 20 26">
    <rect width="20" height="26" rx="2" fill="#89a4be" stroke="none" />
    <path d="M4 8h5M4 11.500h5M4 15h12M4 18.500h12" stroke="#fff" strokeWidth="1.500" />
    <rect x="11" y="7" width="5" height="5" fill="#fff" stroke="none" />
  </Svg>
);
const PicturesIcon = () => (
  <Svg w={23} h={23} vb="0 0 23 23">
    <rect width="23" height="23" rx="2" fill="#1a86d8" stroke="none" />
    <path d="M3 21l8-8.500a1.500 1.500 0 0 1 2 0L20 21z" fill="#f3faff" stroke="none" />
    <circle cx="17.500" cy="5.500" r="2.200" fill="#fff" stroke="none" />
  </Svg>
);
const DropboxIcon = () => (
  <Svg w={26} h={25} vb="0 0 26 23">
    <path d="M6.500 0L13 4.200 6.500 8.400 0 4.200zM19.500 0L26 4.200l-6.500 4.200L13 4.200zM0 12.600l6.500-4.200 6.500 4.200-6.500 4.200zM19.500 8.400l6.500 4.200-6.500 4.200-6.500-4.200zM6.500 18.300L13 14.100l6.500 4.200L13 22.500z" fill="#0d6bff" stroke="none" />
  </Svg>
);
const OneDriveIcon = () => (
  <Svg w={26} h={17} vb="0 0 26 17">
    <path d="M6 6a7.500 7.500 0 0 1 14-1.500L14 12z" fill="#0a60b4" stroke="none" />
    <path d="M5.500 5.500A5.800 5.800 0 0 0 5.800 17h5L19 9 9.500 6z" fill="#1273cc" stroke="none" />
    <path d="M11 12l7.500-6.500A6 6 0 0 1 20.500 17H5.500A5.500 5.500 0 0 1 1.500 14z" fill="#2ba3ea" stroke="none" />
  </Svg>
);
const ThisPcIcon = () => (
  <Svg w={24} h={22} vb="0 0 24 24">
    <rect x=".5" y="0.500" width="23" height="18" rx="1.500" fill="url(#deskFill)" stroke="#3f7d9c" strokeWidth="1" />
    <path d="M10 19h4v3h-4zM6 22h12v1.800H6z" fill="#5d6e78" stroke="none" />
  </Svg>
);
const NetworkIcon = () => (
  <Svg w={26} h={26} vb="0 0 26 27">
    <rect x="4" y="4" width="21.500" height="17" rx="1.500" fill="url(#deskFill)" stroke="#3f7d9c" strokeWidth="1" />
    <path d="M13 21h4v3.500h-4zM9 25h12v1.700H9z" fill="#5d6e78" stroke="none" />
    <circle cx="7" cy="7" r="7" fill="#6fb2dc" stroke="none" />
    <path d="M3 3c3-2 6 0 4 3s-3 3-1 6M10 2c0 3 1 4 3 5" stroke="#d9eef8" strokeWidth="1.600" />
  </Svg>
);
const BlankFile = () => (
  <Svg w={20} h={25} vb="0 0 20 26">
    <path d="M.8.800H13l6.200 6.500v18H.800z" fill="#fbfbfb" stroke="#8d8d8d" strokeWidth="1.300" />
    <path d="M13 .8v6.500h6.200" stroke="#8d8d8d" strokeWidth="1.200" />
  </Svg>
);
const GephiFile = () => (
  <Svg w={22} h={25} vb="0 0 22 26">
    <path d="M.6.600h20.800v17L14 25.400H.600z" fill="#f3f3f3" stroke="#c9c9c9" strokeWidth="1.200" />
    <path d="M21.400 17.600H17l-3 7.800z" fill="#fff" stroke="#b5b5b5" strokeWidth="1" />
    <path d="M7 4C3.500 5 4 10 8 9.500c4-1 5-5 3.500-6C9 3 6 8 7.500 10.500c1.500 1.500 4-1 4.500-2.500-1 4-3.500 7-6 6M13 9.500c-2 2-1.500 4.500.5 4.500s4-3 3-5c-1.500-1.500-2.500 2-3 7" stroke="#666" strokeWidth="1" />
  </Svg>
);
const ScriptFile = () => (
  <Svg w={23} h={26} vb="0 0 23 27">
    <path d="M.8.800H18l4.200 4.700v20.700H.800z" fill="#fff" stroke="#3d3d3d" strokeWidth="1.300" />
    <path d="M7 5h10v3h-3l3 8v3c0 2-1 4-3 4H5v-3h4L6 11V8c0-2 0-2.500 1-3z" fill="#f2e96a" stroke="#4d4d12" strokeWidth="1.100" />
    <path d="M8 9h4M9 12h4M10 15h4M10 18h4" stroke="#6b6b1a" strokeWidth="1" />
  </Svg>
);
const PythonFile = () => (
  <Svg w={24} h={26} vb="0 0 24 26">
    <path d="M2.700.700H13l6 6.500v18H2.700z" fill="#fbfbfb" stroke="#8d8d8d" strokeWidth="1.200" />
    <path d="M5 5h6M5 8h6M5 11h4M5 14h4M5 17h3" stroke="#a5a5a5" strokeWidth="1" />
    <path d="M14 8h4a2.500 2.500 0 0 1 2.500 2.500V15a2 2 0 0 1-2 2H14a3 3 0 0 0-3 2.500H9.500A2.500 2.500 0 0 1 8 17v-2.500A2.500 2.500 0 0 1 10.500 12H12v-2a2 2 0 0 1 2-2z" fill="#3d74a8" stroke="none" />
    <path d="M18 26h-4a2.500 2.500 0 0 1-2.500-2.500V20a2 2 0 0 1 2-2h5a2.500 2.500 0 0 0 2.500-2.500V13.500h.5A2.500 2.500 0 0 1 24 16v3a2.500 2.500 0 0 1-2.500 2.500H20V24a2 2 0 0 1-2 2z" fill="#fbd148" stroke="none" />
  </Svg>
);
const EdgeIcon = () => (
  <Svg w={27} h={27} vb="0 0 27 27">
    <defs>
      <linearGradient id="edgeTop" x1="0" y1="0" x2="1" y2="0.300">
        <stop offset="0" stopColor="#1a8fd4" />
        <stop offset="0.500" stopColor="#2cc0cf" />
        <stop offset="1" stopColor="#63d858" />
      </linearGradient>
    </defs>
    <path d="M.5 14C.5 6 6 0 14 0c7 0 13 5 13 11 0 4.500-3.500 7-7.500 7-2 0-4-.5-3.500-2 1-1.500 1-3.500-.5-5C12 7 4 7.500.5 14z" fill="url(#edgeTop)" stroke="none" />
    <path d="M.5 14C.5 21 6 27 13.500 27c5 0 9-2.500 11-6-7 3-15 1-15-5.500 0-3 2-5 4-5.500C9 7 2 9 .5 14z" fill="#1268bd" stroke="none" />
    <path d="M9.500 15.500c0 6.500 8 8.500 15 5.500-2 3.500-6 6-11 6-4-2-6.500-7-4-11.500z" fill="#0b4a97" stroke="none" />
  </Svg>
);
const MarkdownFile = () => (
  <Svg w={20} h={25} vb="0 0 20 26">
    <path d="M1 1h12l6 6v18H1z" fill="#f2f2f2" stroke="#dcdcdc" strokeWidth="1.200" />
    <path d="M4 17v-6l2.500 3L9 11v6M14 11v5.500M11.800 14.500L14 17l2.200-2.500" stroke="#8b8b8b" strokeWidth="1.500" />
  </Svg>
);

type Nav = { n: string; w: number; top?: boolean; i?: React.ReactNode; chev?: "down" | "right"; pin?: boolean; gap?: boolean; sel?: boolean };
const NAV: Nav[] = [
  { n: "Quick access", w: 109.3, top: true, i: <StarIcon />, chev: "down" },
  { n: "Desktop", w: 70.2, i: <DesktopIcon />, pin: true },
  { n: "Downloads", w: 94.7, i: <DownloadIcon />, pin: true },
  { n: "Documents", w: 97.8, i: <DocumentsIcon />, pin: true },
  { n: "Pictures", w: 67, i: <PicturesIcon />, pin: true },
  { n: "2nd Semester", w: 116.5, pin: true },
  { n: "MBA", w: 41.6, pin: true },
  { n: "Excercise 10", w: 103.5 },
  { n: "gexf-js-master", w: 122.8 },
  { n: "js", w: 13 },
  { n: "Resumes", w: 75.4 },
  { n: "Dropbox", w: 73.4, top: true, i: <DropboxIcon />, chev: "right", gap: true },
  { n: "OneDrive - The University of Texas at Dallas", w: 373.6, top: true, i: <OneDriveIcon />, chev: "down", gap: true },
  { n: "Attachments", w: 108.7, chev: "right" },
  { n: "Backyard", w: 76, chev: "right" },
  { n: "MBA", w: 41.6, chev: "right" },
  { n: "Microsoft Teams Chat Files", w: 228.4, chev: "right" },
  { n: "OneNote Uploads", w: 153.5, chev: "right" },
  { n: "Personal", w: 71.3, chev: "right" },
  { n: "This PC", w: 62, top: true, i: <ThisPcIcon />, chev: "right", gap: true, sel: true },
  { n: "Network", w: 71.8, top: true, i: <NetworkIcon />, chev: "right", gap: true },
];

type FileRow = [string, number, React.ReactNode, string, number, string, number];
const FILES: FileRow[] = [
  ["img", 31.7, <Folder />, "4/4/2022 11:32 AM", 162.3, "File folder", 84],
  ["js", 12.5, <Folder />, "4/6/2022 9:30 AM", 152.2, "File folder", 84],
  ["styles", 46.8, <Folder />, "4/4/2022 11:32 AM", 162.3, "File folder", 84],
  [".project", 63, <BlankFile />, "4/4/2022 11:32 AM", 162.3, "PROJECT File", 111.2],
  ["celegans", 74.4, <GephiFile />, "4/4/2022 11:32 AM", 162.3, "GEXF Graph File", 134.6],
  ["config", 52.6, <ScriptFile />, "4/6/2022 9:39 AM", 152.2, "JavaScript File", 118.7],
  ["gexf2json", 81.7, <PythonFile />, "4/4/2022 11:32 AM", 162.3, "Python File", 93.7],
  ["index", 45.8, <EdgeIcon />, "4/4/2022 11:32 AM", 162.3, "Microsoft Edge HTML Document", 281],
  ["LICENSE", 71.3, <BlankFile />, "4/4/2022 11:32 AM", 162.3, "File", 27.7],
  ["miserables", 89.5, <GephiFile />, "4/4/2022 11:32 AM", 162.3, "GEXF Graph File", 134.6],
  ["README", 76, <MarkdownFile />, "4/4/2022 11:32 AM", 162.3, "Markdown File", 124.5],
  ["Rob_Lindsay_Industry", 182.6, <GephiFile />, "4/4/2022 4:43 PM", 150, "GEXF Graph File", 134.6],
  ["Rob_Lindsay_IntExt", 161.8, <GephiFile />, "4/6/2022 9:04 AM", 152.2, "GEXF Graph File", 134.6],
  ["RobLindsay_Industry", 174.3, <GephiFile />, "4/4/2022 4:45 PM", 150, "Gephi Project File", 148.5],
  ["RobLindsay_IntExt", 154, <GephiFile />, "4/4/2022 4:55 PM", 150, "Gephi Project File", 148.5],
  ["RobLindsay_Website", 172.7, <GephiFile />, "4/4/2022 12:06 PM", 160.7, "Gephi Project File", 148.5],
  ["RobLindsay_Website", 172.7, <GephiFile />, "4/4/2022 12:07 PM", 160.7, "GEXF Graph File", 134.6],
];
const SELECTED = 15;

function Explorer() {
  return (
    <div className="absolute left-[2470px] top-[853px] h-[1310px] w-[1588px] bg-[linear-gradient(180deg,#e6e6e6_0%,#cfcfcf_50%,#b4b4b4_100%)] pl-[5px] pt-[2px]">
      <div className="flex h-[1301px] w-[1574px] flex-col overflow-hidden rounded-[11px] border-2 border-[#a6a6a6] bg-white text-[18.500px] leading-[26px] text-[#141414]">
        <div className="h-[134px] shrink-0 border-b-2 border-[#dedede] bg-[linear-gradient(100deg,#fbf0ee_0%,#f9f1ee_18%,#f5f3ee_36%,#f2f3f6_55%,#f1f1f9_75%,#f1f3f8_100%)]">
          {/* title bar */}
          <div className="flex h-[44px] items-center pl-[9px]">
            <Folder />
            <Fit w={123} className="ml-[6px] pt-[1px]">
              gexf-js-master
            </Fit>
            <div className="ml-auto mr-[30px] flex items-center text-black">
              <div className="h-[2px] w-[14px] bg-black" />
              <div className="ml-[61px] h-[15px] w-[14px] rounded-[2px] border-[1.500px] border-black" />
              <div className="ml-[60px]">
                <CloseX s={15} sw={1.5} />
              </div>
            </div>
          </div>
          {/* command bar */}
          <div className="flex h-[88px] items-center pl-[33px] pt-[2px] text-[#555]">
            <Svg w={25} h={25} vb="0 0 25 25">
              <circle cx="12.500" cy="12.500" r="11.500" strokeWidth="1.600" />
              <path d="M12.500 7v11M7 12.500h11" stroke="#0f78d0" strokeWidth="1.800" />
            </Svg>
            <Fit w={38} className="ml-[14px] pt-[2px] text-[#222]">
              New
            </Fit>
            <Chevron dir="down" w={9} className="ml-[13px]" />
            <div className="ml-[28px] h-[51px] w-px bg-[#d9d7d7]" />
            <Svg w={24} h={26} vb="0 0 24 26" className="ml-[30px]">
              <path d="M4.500 1l11 16M19.500 1l-11 16" strokeWidth="1.600" />
              <circle cx="5.500" cy="21" r="4.200" stroke="#0f78d0" strokeWidth="1.800" />
              <circle cx="18.500" cy="21" r="4.200" stroke="#0f78d0" strokeWidth="1.800" />
            </Svg>
            <Svg w={21} h={26} vb="0 0 21 26" className="ml-[55px]">
              <path d="M1 5v16a4 4 0 0 0 4 4h10" strokeWidth="1.700" />
              <rect x="4.500" y="1" width="15.500" height="20.500" rx="3" stroke="#0f78d0" fill="#f7fbff" strokeWidth="1.800" />
            </Svg>
            <Svg w={24} h={26} vb="0 0 24 26" className="ml-[56px] text-[#b9b9b9]">
              <path d="M5 3H3a2 2 0 0 0-2 2v18a2 2 0 0 0 2 2h5M13 3h2.500a2 2 0 0 1 2 2" strokeWidth="1.600" />
              <rect x="5.500" y="1" width="7.500" height="4" rx="1.500" strokeWidth="1.500" />
              <rect x="10.500" y="8.500" width="12.500" height="16.500" rx="2" stroke="#9fcbe8" fill="#f5f8fb" strokeWidth="1.700" />
            </Svg>
            <Svg w={27} h={26} vb="0 0 27 26" className="ml-[53px]">
              <path d="M14 3.500H4a3 3 0 0 0-3 3v12a3 3 0 0 0 3 3h10M20.500 3.500H23a3 3 0 0 1 3 3v12a3 3 0 0 1-3 3h-2.500" strokeWidth="1.600" />
              <path d="M14 1h7M17.500 1v24M14 25h7" stroke="#0f78d0" strokeWidth="1.900" />
              <path d="M5 12.500h7.500" stroke="#0f78d0" strokeWidth="3.500" strokeLinecap="butt" />
            </Svg>
            <Svg w={25} h={25} vb="0 0 25 25" className="ml-[52px]">
              <path d="M10 4H4a3 3 0 0 0-3 3v14a3 3 0 0 0 3 3h14a3 3 0 0 0 3-3v-2" strokeWidth="1.600" />
              <path d="M15.500 1.500l8.500 7-8.500 7V11.500C10.500 11 8 13 5.500 17 6 10 10 6 15.500 5.500z" stroke="#0f78d0" strokeWidth="1.700" />
            </Svg>
            <Svg w={24} h={26} vb="0 0 24 26" className="ml-[53px]">
              <path d="M1 4.500h22M3 4.500l2 18a2.500 2.500 0 0 0 2.500 2.500h9a2.500 2.500 0 0 0 2.500-2.500l2-18M8.500 4.500a3.500 3.500 0 0 1 7 0M9.800 10.500v8.500M14.200 10.500v8.500" strokeWidth="1.600" />
            </Svg>
            <div className="ml-[30px] h-[51px] w-px bg-[#d9d7d7]" />
            <Svg w={27} h={23} vb="0 0 27 23" className="ml-[26px]">
              <path d="M7 22V1.500M1 8l6-6.500L13 8" strokeWidth="1.600" />
              <path d="M19.500 1v20.500M13.500 15l6 6.500L26 15" stroke="#0f78d0" strokeWidth="1.700" />
            </Svg>
            <Fit w={36} className="ml-[12px] pt-[2px] text-[#222]">
              Sort
            </Fit>
            <Chevron dir="down" w={9} className="ml-[12px]" />
            <Svg w={26} h={18} vb="0 0 26 18" className="ml-[47px]">
              <path d="M1 1.200h24M1 6.400h24M1 11.600h24M1 16.800h24" strokeWidth="1.700" />
            </Svg>
            <Fit w={42} className="ml-[13px] pt-[2px] text-[#222]">
              View
            </Fit>
            <Chevron dir="down" w={9} className="ml-[11px]" />
            <div className="ml-[28px] h-[51px] w-px bg-[#d9d7d7]" />
            <Svg w={27} h={6} vb="0 0 27 6" className="ml-[26px]">
              <g fill="#111" stroke="none">
                <circle cx="3" cy="3" r="2.700" />
                <circle cx="13.500" cy="3" r="2.700" />
                <circle cx="24" cy="3" r="2.700" />
              </g>
            </Svg>
          </div>
        </div>
        {/* address row */}
        <div className="flex h-[79px] shrink-0 items-center pb-[1px] text-[#5a5a5a]">
          <ArrowLeft w={18} sw={2.4} className="ml-[20px]" />
          <ArrowLeft w={18} sw={2.4} className="ml-[34px] rotate-180 text-[#9a9a9a]" />
          <Chevron dir="down" w={10} className="ml-[28px]" />
          <Svg w={18} h={19} vb="0 0 18 19" className="ml-[33px]">
            <path d="M9 18V1.500M1 9.500l8-8 8 8" strokeWidth="1.900" />
          </Svg>
          <div className="ml-[24px] flex h-[59px] w-[653px] items-center border border-[#d6d6d6] pl-[12px] pr-[20px]">
            <div className="pb-[4px]">
              <Folder />
            </div>
            <Svg w={8} h={8} vb="0 0 8 8" className="ml-[13px]">
              <path d="M3.500 1L1 4l2.500 3M7 1L4.500 4 7 7" strokeWidth="1.200" />
            </Svg>
            <Fit w={199} className="ml-[13px] pt-[1px] text-[#141414]">
              DataViz Assignment 10
            </Fit>
            <Chevron dir="right" w={10} className="ml-[15px]" />
            <Fit w={122} className="ml-[15px] pt-[1px] text-[#141414]">
              gexf-js-master
            </Fit>
            <Chevron dir="down" w={16} className="ml-auto" />
            <div className="ml-[40px]">
              <Reload w={19} />
            </div>
          </div>
          <div className="ml-[11px] flex h-[59px] w-[692px] items-center border border-[#d6d6d6] pl-[23px]">
            <Svg w={20} h={20} vb="0 0 20 20">
              <circle cx="12.500" cy="7.500" r="6.500" strokeWidth="1.400" />
              <path d="M8 12l-7 7" strokeWidth="1.500" />
            </Svg>
            <Fit w={186} className="ml-[22px] pt-[2px] text-[#6a6a6a]">
              Search gexf-js-master
            </Fit>
          </div>
        </div>
        <div className="flex min-h-0 flex-1">
          {/* navigation pane */}
          <div className="w-[487px] shrink-0 border-r-2 border-[#f0f0f0] pt-[14px]">
            {NAV.map((r, i) => (
              <div key={i} className={"flex h-[44.440px] items-center pl-[2px] pr-[3px] " + (r.gap ? "mt-[11.300px]" : "")}>
                <div
                  className={
                    "flex h-[39px] w-full items-center rounded-[2px] pr-[4px] " +
                    (r.top ? "pl-[12px] " : "pl-[25px] ") +
                    (r.sel ? "bg-[#d9d9d9]" : "")
                  }
                >
                  <div className={"flex w-[12px] justify-center " + (r.chev === "down" ? "text-[#222]" : "text-[#888]")}>
                    {r.chev && <Chevron dir={r.chev} w={r.chev === "down" ? 13 : 14} />}
                  </div>
                  <div className="ml-[14px] flex w-[26px] justify-center pb-[2px]">{r.i || <Folder />}</div>
                  <Fit w={r.w} className="ml-[6px] pt-[2px]">
                    {r.n}
                  </Fit>
                  {r.pin && (
                    <div className="ml-auto">
                      <Pin />
                    </div>
                  )}
                </div>
              </div>
            ))}
          </div>
          {/* file list */}
          <div className="flex min-w-0 flex-1 flex-col">
            <div className="relative ml-[25px] grid h-[45px] shrink-0 grid-cols-[376.700px_279.300px_341px_1fr] text-[#4c607a]">
              <Chevron dir="up" w={10} className="absolute left-[191px] top-[1px] text-[#777]" />
              <div className="flex items-center pl-[15px]">
                <div className="h-[20px] w-[19px] rounded-[4px] border-[1.500px] border-[#6d6d6d] bg-[#f6f6f6]" />
                <Fit w={51} className="ml-[19px] pt-[2px]">
                  Name
                </Fit>
              </div>
              <div className="flex items-center border-l border-[#e0e0e0] pl-[9.600px]">
                <Fit w={120.5} className="pt-[2px]">
                  Date modified
                </Fit>
              </div>
              <div className="flex items-center border-l border-[#e0e0e0] pl-[8.600px]">
                <Fit w={39.5} className="pt-[2px]">
                  Type
                </Fit>
              </div>
              <div className="flex items-center border-l border-[#e0e0e0] pl-[9px]">
                <Fit w={34} className="pt-[2px]">
                  Size
                </Fit>
              </div>
            </div>
            <div className="ml-[25px] mt-[5px] flex-1">
              {FILES.map((f, i) => (
                <div key={i} className="flex h-[52px] items-center">
                  <div
                    className={
                      "grid h-[45px] w-full grid-cols-[376.700px_279.300px_1fr] items-center border-y " +
                      (i === SELECTED ? "border-[#99cdee] bg-[#cce8ff] shadow-[inset_1px_0_0_#99cdee]" : "border-transparent")
                    }
                  >
                    <div className="flex items-center pl-[6px]">
                      <div className={"flex h-[19px] w-[19px] items-center justify-center rounded-[4px] " + (i === SELECTED ? "bg-[#0560b6]" : "")}>
                        {i === SELECTED && (
                          <Svg w={10} h={8} vb="0 0 10 8" className="text-white">
                            <path d="M1 4l3 3 5-6" strokeWidth="1.200" />
                          </Svg>
                        )}
                      </div>
                      <div className="ml-[3px] flex w-[27px] justify-center pb-[2px]">{f[2]}</div>
                      <Fit w={f[1]} className="ml-[6px] pt-[1px]">
                        {f[0]}
                      </Fit>
                    </div>
                    <Fit w={f[4]} className="ml-[10.600px] pt-[1px] text-[#6d6d6d]">
                      {f[3]}
                    </Fit>
                    <Fit w={f[6]} className="ml-[9.600px] pt-[1px] text-[#6d6d6d]">
                      {f[5]}
                    </Fit>
                  </div>
                </div>
              ))}
            </div>
            <div className="ml-[2px] flex h-[28px] shrink-0 items-center bg-[#efefef] pl-[28px]">
              <div className="h-[15px] w-[878px] bg-[#858585]" />
            </div>
          </div>
        </div>
        {/* status bar */}
        <div className="flex h-[37px] shrink-0 items-center text-[#2c4468]">
          <Fit w={71} className="ml-[21px] pt-[3px]">
            17 items
          </Fit>
          <div className="ml-[17px] h-[24px] w-px bg-[#e4e4e4]" />
          <Fit w={128.5} className="ml-[16px] pt-[3px]">
            1 item selected
          </Fit>
          <Fit w={62.5} className="ml-[12px] pt-[3px]">
            62.6 KB
          </Fit>
          <div className="ml-[17px] h-[24px] w-px bg-[#e4e4e4]" />
          <div className="ml-auto flex h-[37px] w-[32px] items-center justify-center border-[1.500px] border-[#4a9cc0] bg-[#cde9f7] text-black">
            <Svg w={20} h={17} vb="0 0 20 17">
              <path d="M1 1h18M1 6h18M1 11h18M1 16h18" strokeWidth="1.800" />
            </Svg>
          </div>
          <div className="ml-[6px] mr-[12px] text-black">
            <Svg w={21} h={20} vb="0 0 21 20">
              <rect x="1" y="1" width="19" height="15" rx="1" strokeWidth="1.900" />
              <path d="M1 19h19" strokeWidth="1.600" />
            </Svg>
          </div>
        </div>
      </div>
    </div>
  );
}

export default function App() {
  return (
    <div className="relative h-[2425px] w-[4096px] overflow-hidden bg-white font-['Open_Sans','Noto_Sans',sans-serif] text-black">
      <BrowserWindow />
      <DirectoryListing />
      <Svg w={390} h={48} vb="2990 623 390 48" className="absolute left-[2990px] top-[623px]">
        <path
          d="M2996 647.500L3184 629v9.500h190v18h-190v9.500z"
          fill="#fff"
          stroke="#000"
          strokeWidth="4.500"
          strokeLinejoin="miter"
        />
      </Svg>
      <div className="absolute left-[3452px] top-[618px] text-[22px] leading-[30px]">
        <Fit w={447}>This is what I am clicking on to open the files.</Fit>
      </div>
      <Explorer />
    </div>
  );
}
